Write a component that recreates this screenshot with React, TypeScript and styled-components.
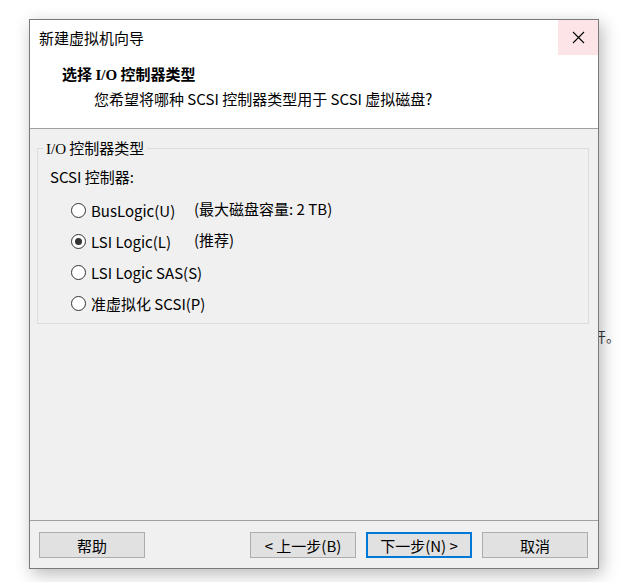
import React from 'react'
import styled, { createGlobalStyle } from 'styled-components'

const GlobalStyle = createGlobalStyle`
  html, body {
    margin: 0;
    padding: 0;
    background: #fff;
  }
  body {
    font-family: "Noto Sans CJK SC", "Liberation Sans", sans-serif;
    color: #000;
  }
`

const options = [
  { label: 'BusLogic(U)', note: '(最大磁盘容量: 2 TB)', checked: false },
  { label: 'LSI Logic(L)', note: '(推荐)', checked: true },
  { label: 'LSI Logic SAS(S)', note: '', checked: false },
  { label: '准虚拟化 SCSI(P)', note: '', checked: false },
]

const App: React.FC = () => {
  return (
    <Page>
      <GlobalStyle />
      <Behind>开。</Behind>
      <Wizard>
        <TitleBar>
          <TitleText>新建虚拟机向导</TitleText>
          <CloseButton aria-label="关闭">
            <svg width="13" height="13" viewBox="0 0 13 13">
              <path d="M1 1 L12 12 M12 1 L1 12" stroke="#000" strokeWidth="1.1" fill="none" />
            </svg>
          </CloseButton>
        </TitleBar>

        <Header>
          <HeaderTitle>
            选择 <Serif>I/O</Serif> 控制器类型
          </HeaderTitle>
          <HeaderSub>您希望将哪种 SCSI 控制器类型用于 SCSI 虚拟磁盘?</HeaderSub>
        </Header>

        <Body>
          <Group>
            <Legend>
              <Serif>I/O</Serif> 控制器类型
            </Legend>
            <GroupCaption>SCSI 控制器:</GroupCaption>
            <Options>
              {options.map((o) => (
                <React.Fragment key={o.label}>
                  <Option>
                    <Radio $checked={o.checked} role="radio" aria-checked={o.checked} />
                    <span>{o.label}</span>
                  </Option>
                  <Note>{o.note}</Note>
                </React.Fragment>
              ))}
            </Options>
          </Group>
        </Body>

        <Footer>
          <Button>帮助</Button>
          <Spacer />
          <Button>&lt; 上一步(B)</Button>
          <Button $primary>下一步(N) &gt;</Button>
          <Button>取消</Button>
        </Footer>
      </Wizard>
    </Page>
  )
}

export default App

const Page = styled.div`
  position: relative;
  width: 624px;
  height: 582px;
  padding: 19px 0 0 29px;
  box-sizing: border-box;
  overflow: hidden;
`

const Behind = styled.span`
  position: absolute;
  left: 592px;
  top: 326px;
  font-size: 14px;
  line-height: 20px;
  color: #333;
`

const Wizard = styled.div`
  position: relative;
  z-index: 1;
  width: 570px;
  height: 550px;
  box-sizing: border-box;
  border: 1px solid #7a7a7a;
  background: #f0f0f0;
  box-shadow: 3px 5px 16px rgba(0, 0, 0, 0.28);
  display: flex;
  flex-direction: column;
`

const TitleBar = styled.div`
  height: 35px;
  display: flex;
  align-items: stretch;
  background: #fff;
`

const TitleText = styled.div`
  flex: 1;
  padding-left: 9px;
  font-size: 15px;
  line-height: 35px;
`

const CloseButton = styled.div`
  width: 40px;
  display: flex;
  align-items: center;
  justify-content: center;
  background: #fde5e7;
`

const Header = styled.div`
  background: #fff;
  border-bottom: 1px solid #a0a0a0;
  padding: 9px 0 0 32px;
  height: 64px;
`

const Serif = styled.span`
  font-family: "Liberation Serif", "Noto Sans CJK SC", serif;
`

const HeaderTitle = styled.div`
  font-size: 15px;
  font-weight: 700;
  line-height: 20px;
`

const HeaderSub = styled.div`
  font-size: 15px;
  line-height: 20px;
  margin-top: 4px;
  padding-left: 32px;
`

const Body = styled.div`
  flex: 1;
  padding: 10px 9px 0 7px;
`

const Group = styled.fieldset`
  margin: 0;
  padding: 0 0 0 5px;
  height: 185px;
  box-sizing: border-box;
  border: 1px solid #dcdcdc;
  min-width: 0;
`

const Legend = styled.legend`
  padding: 0 3px;
  font-size: 15px;
  line-height: 18px;
`

const GroupCaption = styled.div`
  margin: 9px 0 0 7px;
  font-size: 15px;
  line-height: 20px;
`

const Options = styled.div`
  display: grid;
  grid-template-columns: 123px auto;
  grid-auto-rows: 31px;
  align-items: center;
  margin: 8px 0 0 28px;
  font-size: 15px;
`

const Option = styled.div`
  display: flex;
  align-items: center;
  gap: 5px;
  line-height: 20px;
  white-space: nowrap;
`

const Radio = styled.span<{ $checked?: boolean }>`
  position: relative;
  width: 15px;
  height: 15px;
  box-sizing: border-box;
  border: 1px solid #333;
  border-radius: 50%;
  background: #fff;
  flex: none;

  &::after {
    content: '';
    display: ${(p) => (p.$checked ? 'block' : 'none')};
    position: absolute;
    left: 3px;
    top: 3px;
    width: 7px;
    height: 7px;
    border-radius: 50%;
    background: #333;
  }
`

const Note = styled.span`
  line-height: 20px;
  margin-top: -3px;
  white-space: nowrap;
`

const Footer = styled.div`
  border-top: 1px solid #a0a0a0;
  display: flex;
  align-items: flex-start;
  gap: 10px;
  padding: 11px 10px 0 9px;
  height: 36px;
`

const Spacer = styled.div`
  flex: 1;
`

const Button = styled.div<{ $primary?: boolean }>`
  width: 106px;
  height: 26px;
  box-sizing: border-box;
  border: ${(p) => (p.$primary ? '2px solid #0078d7' : '1px solid #adadad')};
  background: #e1e1e1;
  display: flex;
  align-items: center;
  justify-content: center;
  font-size: 15px;
`
